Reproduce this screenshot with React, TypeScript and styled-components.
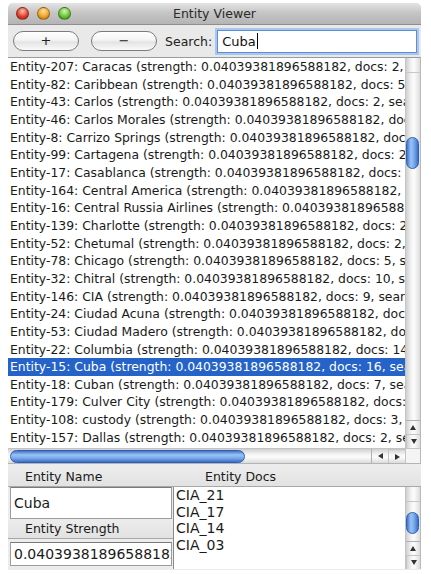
import React from 'react'
import styled, { createGlobalStyle } from 'styled-components'

const GlobalStyle = createGlobalStyle`
  html, body {
    margin: 0;
    padding: 0;
    background: #fff;
  }
  body {
    font-family: "DejaVu Sans", "Liberation Sans", sans-serif;
    font-size: 12.4px;
    color: #1a1a1a;
  }
`

const Window = styled.div`
  width: 413px;
  margin: 3px 0 0 8px;
  background: #e8e8e8;
  border-radius: 5px 5px 0 0;
  overflow: hidden;
`

const TitleBar = styled.div`
  height: 22px;
  position: relative;
  display: flex;
  align-items: center;
  justify-content: center;
  background: linear-gradient(#e4e4e4, #c6c6c6 45%, #b4b4b4);
  border-bottom: 1px solid #8e8e8e;
  box-sizing: border-box;
  font-size: 12.5px;
  color: #2a2a2a;
`

const Lights = styled.div`
  position: absolute;
  left: 8px;
  top: 4px;
  display: flex;
  gap: 8px;
`

const Light = styled.span<{ $c: string; $d: string; $h: string }>`
  width: 13px;
  height: 13px;
  border-radius: 50%;
  border: 1px solid rgba(0, 0, 0, 0.35);
  box-sizing: border-box;
  background: radial-gradient(circle at 50% 30%, ${(p) => p.$h} 0, ${(p) => p.$c} 55%, ${(p) => p.$d} 100%);
`

const Toolbar = styled.div`
  height: 32px;
  display: flex;
  align-items: center;
  padding: 0 2px 0 5px;
  background: #e9e9e9;
`

const AquaButton = styled.button`
  width: 66px;
  height: 20px;
  margin-right: 12px;
  border-radius: 10px;
  border: 1px solid #7c7c7c;
  background: linear-gradient(#ffffff, #f4f4f4 45%, #e3e3e3 55%, #fafafa);
  font-family: "DejaVu Sans", sans-serif;
  font-size: 13px;
  line-height: 16px;
  color: #222;
  padding: 0;
`

const SearchLabel = styled.span`
  font-size: 12.5px;
  color: #222;
  margin-left: -4px;
  margin-right: 5px;
`

const SearchField = styled.div`
  flex: 1;
  height: 21px;
  border: 1px solid #5e8fd4;
  box-shadow: 0 0 0 2px #a9c6ee;
  background: #fff;
  display: flex;
  align-items: center;
  padding-left: 4px;
  font-size: 13px;
  color: #111;
  margin-right: 2px;
`

const Caret = styled.span`
  width: 1px;
  height: 16px;
  background: #000;
  margin-left: 1px;
`

const ListArea = styled.div`
  display: grid;
  grid-template-columns: 397px 15px;
  grid-template-rows: 390px 15px;
  border-top: 1px solid #9a9a9a;
  border-right: 1px solid #b8b8b8;
  background: #fff;
`

const Viewport = styled.div`
  overflow: hidden;
`

const Row = styled.div<{ $sel?: boolean }>`
  height: 17.67px;
  line-height: 17.67px;
  white-space: nowrap;
  overflow: hidden;
  padding-left: 2px;
  background: ${(p) => (p.$sel ? '#2563c8' : 'transparent')};
  color: ${(p) => (p.$sel ? '#fff' : '#1a1a1a')};
`

const VTrack = styled.div`
  display: flex;
  flex-direction: column;
  background: linear-gradient(to right, #cfcfcf, #f6f6f6 40%, #fbfbfb 60%, #dcdcdc);
  border-left: 1px solid #c4c4c4;
  box-sizing: border-box;
`

const HTrack = styled.div`
  display: flex;
  align-items: center;
  background: linear-gradient(#cfcfcf, #f6f6f6 40%, #fbfbfb 60%, #dcdcdc);
  border-top: 1px solid #c4c4c4;
  box-sizing: border-box;
`

const TrackCap = styled.div<{ $vertical?: boolean }>`
  ${(p) =>
    p.$vertical
      ? 'height: 14px; border-radius: 7px 7px 0 0; border-bottom: 1px solid #c8c8c8;'
      : 'width: 2px;'}
`

const Thumb = styled.div<{ $vertical?: boolean }>`
  box-sizing: border-box;
  border: 1px solid #2f5fae;
  border-radius: 7px;
  ${(p) =>
    p.$vertical
      ? 'width: 13px; background: linear-gradient(to right, #3f73cf, #9cc2f3 35%, #78a9ec 65%, #3a6dcb);'
      : 'height: 13px; background: linear-gradient(#3f73cf, #9cc2f3 35%, #78a9ec 65%, #3a6dcb);'}
`

const Spacer = styled.div`
  flex: 1;
`

const ArrowBox = styled.div<{ $vertical?: boolean }>`
  display: flex;
  flex-direction: ${(p) => (p.$vertical ? 'column' : 'row')};
  border-${(p) => (p.$vertical ? 'top' : 'left')}: 1px solid #b0b0b0;
`

const ArrowBtn = styled.div<{ $dir: 'up' | 'down' | 'left' | 'right' }>`
  width: ${(p) => (p.$dir === 'up' || p.$dir === 'down' ? '13px' : '16px')};
  height: 13px;
  display: flex;
  align-items: center;
  justify-content: center;
  & + & {
    border-${(p) => (p.$dir === 'down' ? 'top' : 'left')}: 1px solid #c4c4c4;
  }
  &::after {
    content: '';
    width: 0;
    height: 0;
    ${(p) =>
      p.$dir === 'up'
        ? 'border-left: 3.5px solid transparent; border-right: 3.5px solid transparent; border-bottom: 5px solid #333;'
        : p.$dir === 'down'
        ? 'border-left: 3.5px solid transparent; border-right: 3.5px solid transparent; border-top: 5px solid #333;'
        : p.$dir === 'left'
        ? 'border-top: 3.5px solid transparent; border-bottom: 3.5px solid transparent; border-right: 5px solid #333;'
        : 'border-top: 3.5px solid transparent; border-bottom: 3.5px solid transparent; border-left: 5px solid #333;'}
  }
`

const Corner = styled.div`
  background: #f4f4f4;
  border-top: 1px solid #c4c4c4;
  border-left: 1px solid #c4c4c4;
`

const Bottom = styled.div`
  display: grid;
  grid-template-columns: 165px 1fr;
  padding-top: 3px;
  background: #ececec;
  border-top: 1px solid #b4b4b4;
  height: 103px;
`

const Column = styled.div`
  display: flex;
  flex-direction: column;
`

const Header = styled.div<{ $indent: number; $h: number }>`
  height: ${(p) => p.$h}px;
  line-height: ${(p) => p.$h}px;
  padding-left: ${(p) => p.$indent}px;
  font-size: 12.5px;
  color: #1a1a1a;
  background: linear-gradient(#ececec, #e2e2e2);
  border-bottom: 1px solid #a8a8a8;
  box-sizing: border-box;
`

const FieldWrap = styled.div<{ $h: number }>`
  height: ${(p) => p.$h}px;
  display: flex;
  align-items: center;
  padding: 0 1px 0 2px;
  background: #ececec;
`

const TextBox = styled.div<{ $h: number }>`
  width: 162px;
  height: ${(p) => p.$h}px;
  box-sizing: border-box;
  border: 1px solid #9c9c9c;
  border-top-color: #7a7a7a;
  background: #fff;
  padding-left: 3px;
  display: flex;
  align-items: center;
  font-size: 14px;
  overflow: hidden;
  white-space: nowrap;
`

const DocsArea = styled.div`
  display: grid;
  grid-template-columns: 1fr 15px;
  height: 82px;
  border-left: 1px solid #8a8a8a;
  border-right: 1px solid #b8b8b8;
  background: #fff;
`

const DocsList = styled.div`
  padding-left: 2px;
  font-size: 14px;
`

const DocRow = styled.div`
  height: 16.7px;
  line-height: 16.7px;
`

const entities: [string, string, number][] = [
  ['207', 'Caracas', 2],
  ['82', 'Caribbean', 5],
  ['43', 'Carlos', 2],
  ['46', 'Carlos Morales', 2],
  ['8', 'Carrizo Springs', 3],
  ['99', 'Cartagena', 2],
  ['17', 'Casablanca', 2],
  ['164', 'Central America', 4],
  ['16', 'Central Russia Airlines', 2],
  ['139', 'Charlotte', 2],
  ['52', 'Chetumal', 2],
  ['78', 'Chicago', 5],
  ['32', 'Chitral', 10],
  ['146', 'CIA', 9],
  ['24', 'Ciudad Acuna', 2],
  ['53', 'Ciudad Madero', 2],
  ['22', 'Columbia', 14],
  ['15', 'Cuba', 16],
  ['18', 'Cuban', 7],
  ['179', 'Culver City', 3],
  ['108', 'custody', 3],
  ['157', 'Dallas', 2],
]

const docs = ['CIA_21', 'CIA_17', 'CIA_14', 'CIA_03']

function VScroll({ thumbTop, thumbHeight }: { thumbTop: number; thumbHeight: number }) {
  return (
    <VTrack>
      <TrackCap $vertical />
      <div style={{ height: thumbTop }} />
      <Thumb $vertical style={{ height: thumbHeight }} />
      <Spacer />
      <ArrowBox $vertical>
        <ArrowBtn $dir="up" />
        <ArrowBtn $dir="down" />
      </ArrowBox>
    </VTrack>
  )
}

export default function App() {
  return (
    <>
      <GlobalStyle />
      <Window>
        <TitleBar>
          <Lights>
            <Light $h="#ffc2b8" $c="#e3412c" $d="#9c1a0c" />
            <Light $h="#ffe3a0" $c="#f0a428" $d="#a86400" />
            <Light $h="#d4f5b0" $c="#6cc43a" $d="#2e7a12" />
          </Lights>
          Entity Viewer
        </TitleBar>
        <Toolbar>
          <AquaButton>+</AquaButton>
          <AquaButton>−</AquaButton>
          <SearchLabel>Search:</SearchLabel>
          <SearchField>
            Cuba
            <Caret />
          </SearchField>
        </Toolbar>
        <ListArea>
          <Viewport>
            {entities.map(([id, name, n]) => (
              <Row key={id} $sel={id === '15'}>
                Entity-{id}: {name} (strength: 0.04039381896588182, docs: {n}, search)
              </Row>
            ))}
          </Viewport>
          <VScroll thumbTop={64} thumbHeight={32} />
          <HTrack>
            <TrackCap />
            <Thumb style={{ width: 235 }} />
            <Spacer />
            <ArrowBox>
              <ArrowBtn $dir="left" />
              <ArrowBtn $dir="right" />
            </ArrowBox>
          </HTrack>
          <Corner />
        </ListArea>
        <Bottom>
          <Column>
            <Header $indent={17} $h={20}>Entity Name</Header>
            <FieldWrap $h={32}>
              <TextBox $h={32}>Cuba</TextBox>
            </FieldWrap>
            <Header $indent={17} $h={20}>Entity Strength</Header>
            <FieldWrap $h={30}>
              <TextBox $h={24}>0.04039381896588182</TextBox>
            </FieldWrap>
          </Column>
          <Column>
            <Header $indent={32} $h={20}>Entity Docs</Header>
            <DocsArea>
              <DocsList>
                {docs.map((d) => (
                  <DocRow key={d}>{d}</DocRow>
                ))}
              </DocsList>
              <VScroll thumbTop={10} thumbHeight={22} />
            </DocsArea>
          </Column>
        </Bottom>
      </Window>
    </>
  )
}
